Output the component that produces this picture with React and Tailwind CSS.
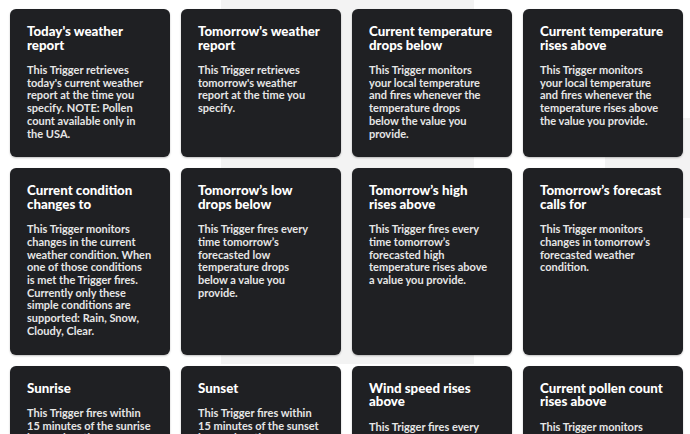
import React from "react";

const rows = [
  [
    { t: ["Today's weather", "report"], d: ["This Trigger retrieves", "today's current weather", "report at the time you", "specify. NOTE: Pollen", "count available only in", "the USA."] },
    { t: ["Tomorrow's weather", "report"], d: ["This Trigger retrieves", "tomorrow's weather", "report at the time you", "specify."] },
    { t: ["Current temperature", "drops below"], d: ["This Trigger monitors", "your local temperature", "and fires whenever the", "temperature drops", "below the value you", "provide."] },
    { t: ["Current temperature", "rises above"], d: ["This Trigger monitors", "your local temperature", "and fires whenever the", "temperature rises above", "the value you provide."] },
  ],
  [
    { t: ["Current condition", "changes to"], d: ["This Trigger monitors", "changes in the current", "weather condition. When", "one of those conditions", "is met the Trigger fires.", "Currently only these", "simple conditions are", "supported: Rain, Snow,", "Cloudy, Clear."] },
    { t: ["Tomorrow\u2019s low", "drops below"], d: ["This Trigger fires every", "time tomorrow\u2019s", "forecasted low", "temperature drops", "below a value you", "provide."] },
    { t: ["Tomorrow\u2019s high", "rises above"], d: ["This Trigger fires every", "time tomorrow\u2019s", "forecasted high", "temperature rises above", "a value you provide."] },
    { t: ["Tomorrow\u2019s forecast", "calls for"], d: ["This Trigger monitors", "changes in tomorrow\u2019s", "forecasted weather", "condition."] },
  ],
  [
    { t: ["Sunrise"], d: ["This Trigger fires within", "15 minutes of the sunrise", "in your location."] },
    { t: ["Sunset"], d: ["This Trigger fires within", "15 minutes of the sunset", "in your location."] },
    { t: ["Wind speed rises", "above"], d: ["This Trigger fires every", "time the wind speed rises", "above a value you", "provide."] },
    { t: ["Current pollen count", "rises above"], d: ["This Trigger monitors", "the pollen count and", "fires when it rises", "above a value you set."] },
  ],
];

function Card({ t, d }) {
  return (
    <div className="rounded-[6px] bg-[#1f2023] px-[17px] pt-[16px] pb-[17px] shadow-[0_1px_2px_rgba(0,0,0,0.25)]">
      <div className="text-[13.3px] leading-[13.5px] font-[900] text-white whitespace-nowrap">
        {t.map((l, i) => (
          <div key={i}>{l}</div>
        ))}
      </div>
      <div className="mt-[12px] text-[11px] leading-[12.7px] font-[700] text-[#e6e6e6] whitespace-nowrap">
        {d.map((l, i) => (
          <div key={i}>{l}</div>
        ))}
      </div>
    </div>
  );
}

export default function App() {
  return (
    <div
      className="relative h-[434px] w-[690px] overflow-hidden bg-white"
      style={{ fontFamily: "Lato, 'Noto Sans', sans-serif" }}
    >
      <div className="absolute left-[221px] top-0 h-[364px] w-[253px] bg-[#f3f3f3]" />
      <div className="absolute left-[605px] top-[118px] h-[100px] w-[85px] bg-[#f3f3f3]" />
      <div className="relative grid grid-cols-[repeat(4,160px)] gap-[11px] pl-[10px] pt-[9px]">
        {rows.flat().map((c, i) => (
          <Card key={i} {...c} />
        ))}
      </div>
    </div>
  );
}
